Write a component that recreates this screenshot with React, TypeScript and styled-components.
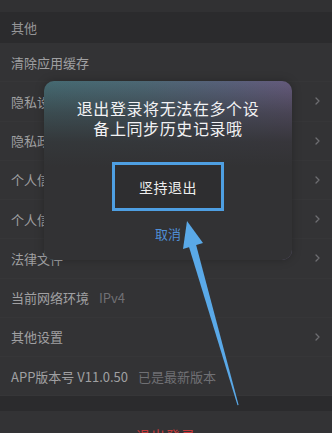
import React from "react";
import styled, { createGlobalStyle } from "styled-components";

const Global = createGlobalStyle`
  html, body { margin: 0; padding: 0; background: #313133; }
  body { width: 332px; height: 433px; overflow: hidden; font-family: "Noto Sans CJK SC", "Noto Sans", sans-serif; }
`;

const Page = styled.div`
  position: relative;
  width: 332px;
  height: 433px;
  overflow: hidden;
  background: #333335;
  display: flex;
  flex-direction: column;
`;

const TopStrip = styled.div`
  height: 12px;
  background: #313133;
  flex-shrink: 0;
`;

const SectionHeader = styled.div`
  height: 31px;
  flex-shrink: 0;
  background: #2b2b2d;
  display: flex;
  align-items: center;
  padding-left: 11px;
  font-size: 13px;
  color: #959597;
`;

const List = styled.div`
  display: flex;
  flex-direction: column;
  background: #333335;
`;

const Row = styled.div`
  height: 39.25px;
  box-sizing: border-box;
  flex-shrink: 0;
  display: flex;
  align-items: center;
  justify-content: space-between;
  padding: 0 11px;
  font-size: 13px;
  color: #a0a0a2;
  border-bottom: 1px solid #363638;
`;

const Label = styled.span`
  display: flex;
  align-items: center;
  gap: 10px;
  white-space: nowrap;
`;

const Sub = styled.span`
  color: #707074;
`;

const Band = styled.div`
  height: 15px;
  flex-shrink: 0;
  background: #2b2b2d;
`;

const LogoutRow = styled.div`
  height: 44px;
  flex-shrink: 0;
  display: flex;
  justify-content: center;
  padding-top: 14px;
  box-sizing: border-box;
  font-size: 14px;
  color: #c93a3c;
  letter-spacing: 1px;
`;

const Dialog = styled.div`
  position: absolute;
  left: 44px;
  top: 81px;
  width: 248px;
  height: 179px;
  border-radius: 10px;
  background: linear-gradient(90deg, #456a72 0%, #4c6774 40%, #58607a 75%, #655a7c 100%);
  box-shadow: 0 0 10px rgba(0, 0, 0, 0.25);
  overflow: hidden;
  display: flex;
  flex-direction: column;
  align-items: center;
  &::before {
    content: "";
    position: absolute;
    inset: 0;
    background: linear-gradient(180deg, rgba(50, 50, 52, 0) 0%, rgba(50, 50, 52, 0.55) 18%, rgba(50, 50, 52, 0.9) 34%, #323234 48%, #323234 100%);
  }
`;

const DialogBody = styled.div`
  position: relative;
  display: flex;
  flex-direction: column;
  align-items: center;
  padding-top: 17px;
`;

const Title = styled.div`
  font-size: 16px;
  line-height: 20px;
  color: #f2f2f4;
  text-align: center;
  letter-spacing: 0.6px;
`;

const ConfirmBox = styled.div`
  margin-top: 24px;
  width: 112px;
  height: 49px;
  box-sizing: border-box;
  border: 3px solid #4e9fe2;
  background: #2e2e30;
  display: flex;
  align-items: center;
  justify-content: center;
  font-size: 14px;
  color: #eeeeee;
  letter-spacing: 0.5px;
`;

const Cancel = styled.div`
  margin-top: 14px;
  font-size: 13px;
  line-height: 18px;
  color: #4f8fd6;
`;

const Annotation = styled.svg`
  position: absolute;
  left: 0;
  top: 0;
  width: 332px;
  height: 433px;
  pointer-events: none;
`;

const Chevron = () => (
  <svg width="7" height="10" viewBox="0 0 7 10">
    <polyline points="2,2 5,5 2,8" fill="none" stroke="#6e6e72" strokeWidth="1.3" strokeLinecap="round" strokeLinejoin="round" />
  </svg>
);

type Item = { label: string; sub?: string; chevron?: boolean };

const items: Item[] = [
  { label: "清除应用缓存" },
  { label: "隐私设置", chevron: true },
  { label: "隐私政策", chevron: true },
  { label: "个人信息收集清单", chevron: true },
  { label: "个人信息共享清单", chevron: true },
  { label: "法律文件", chevron: true },
  { label: "当前网络环境", sub: "IPv4" },
  { label: "其他设置", chevron: true },
  { label: "APP版本号 V11.0.50", sub: "已是最新版本" },
];

export default function App() {
  return (
    <>
      <Global />
      <Page>
        <TopStrip />
        <SectionHeader>其他</SectionHeader>
        <List>
          {items.map((it) => (
            <Row key={it.label}>
              <Label>
                {it.label}
                {it.sub && <Sub>{it.sub}</Sub>}
              </Label>
              {it.chevron && <Chevron />}
            </Row>
          ))}
        </List>
        <Band />
        <LogoutRow>退出登录</LogoutRow>

        <Dialog>
          <DialogBody>
            <Title>
              退出登录将无法在多个设
              <br />
              备上同步历史记录哦
            </Title>
            <ConfirmBox>坚持退出</ConfirmBox>
            <Cancel>取消</Cancel>
          </DialogBody>
        </Dialog>

        <Annotation viewBox="0 0 332 433">
          <polygon points="187,221 203,243 183,249" fill="#5aa9e8" />
          <polygon points="195.6,243 188.4,245 237.5,405.3 238.6,405" fill="#5aa9e8" />
        </Annotation>
      </Page>
    </>
  );
}
